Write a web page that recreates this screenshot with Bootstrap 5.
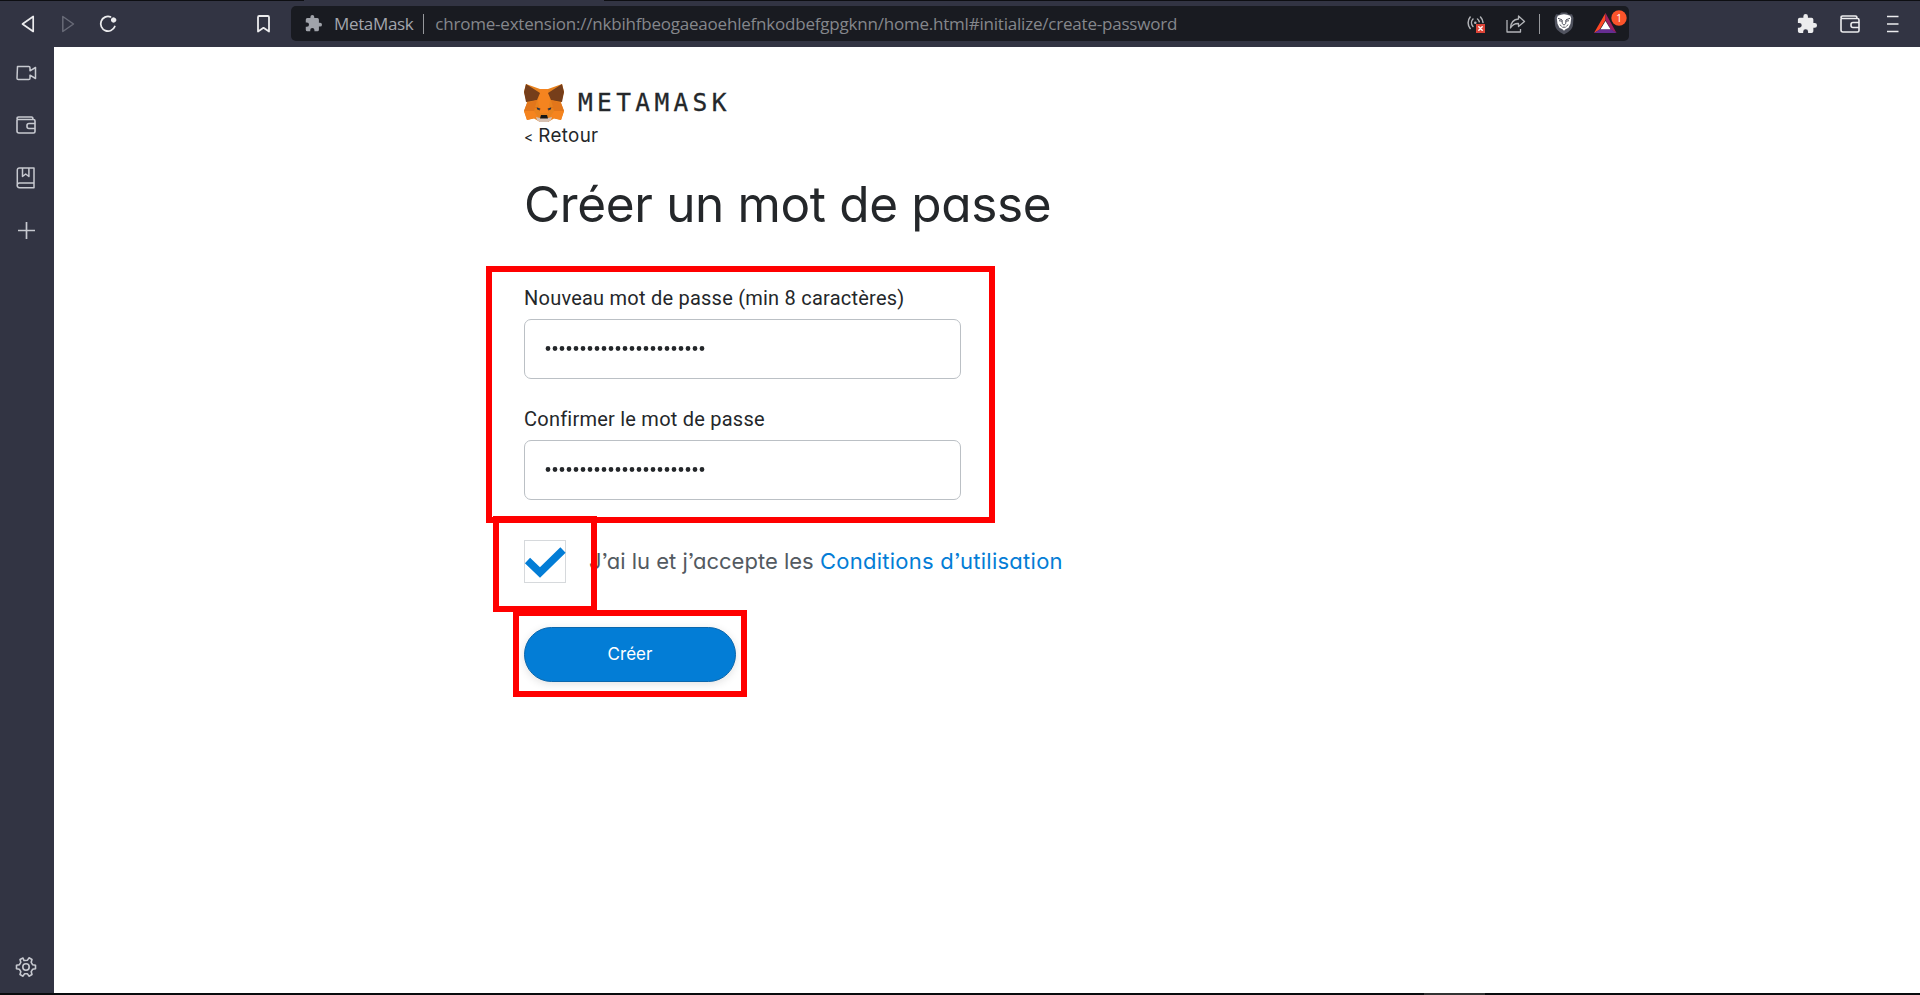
<!DOCTYPE html>
<html lang="fr">
<head>
<meta charset="utf-8">
<meta name="viewport" content="width=device-width, initial-scale=1">
<title>MetaMask</title>
<link href="https://cdn.jsdelivr.net/npm/bootstrap@5.3.0/dist/css/bootstrap.min.css" rel="stylesheet">
<style>
  html, body { height: 100%; overflow: hidden; }
  body { background: #fff; color: #24272a; font-family: Inter, "Noto Sans", sans-serif; }
  svg { display: block; flex: none; overflow: visible; }
  .toolbar { height: 47px; background: #323443; border-top: 1px solid #0d0e12; color: #ececee; padding: 5px 21px 6px 21px; }
  .seam { top: 0; left: 304px; width: 300px; height: 1px; background: #323443; }
  .address { width: 1338px; height: 35px; background: #191b21; border-radius: 5px; margin-left: 21px; padding-left: 14px; font: 17px/35px "Open Sans", sans-serif; color: #85878c; white-space: nowrap; }
  .site { color: #a3a6ad; margin-left: 12px; letter-spacing: -.35px; }
  .rule { width: 1px; height: 20px; background: #96989c; }
  .url { margin-left: 11px; letter-spacing: -.21px; }
  .sidebar { width: 54px; background: #323443; color: #c7c9d0; padding: 18px 0 15px 15px; }
  .taskbar { height: 2px; background: #090b0d; padding-left: 1424px; }
  .taskbar span { width: 61px; background: #333; }
  .page { padding: 37px 0 0 470px; }
  .wordmark { font: 24.5px/38px "DejaVu Sans Mono", monospace; letter-spacing: 4.35px; margin-left: 14px; -webkit-text-stroke: .3px #24272a; }
  .back { font-size: 18.8px; line-height: 23px; margin-top: 2px; letter-spacing: .35px; }
  .chevron { font-size: 14px; margin-right: -1px; }
  .heading { font-size: 49.5px; line-height: 52px; font-weight: 400; margin: 30px 0 56px; white-space: nowrap; letter-spacing: -.35px; }
  .euclid { font-feature-settings: "cv11", "ss03"; }
  .field-label { font: 20px/24px Roboto, sans-serif; margin-bottom: 9px; letter-spacing: .23px; }
  .secret { width: 437px; height: 60px; border: 1px solid #bbc0c5; border-radius: 7px; padding: 0 21px; }
  .tick { width: 42px; height: 43px; border: 1px solid #d6d9dc; }
  .terms { margin: 40px 0 44px; font-size: 22px; line-height: 43px; color: #535a61; white-space: nowrap; }
  .terms a { color: #037dd6; text-decoration: none; letter-spacing: .26px; }
  .create { width: 212px; height: 55px; border-radius: 28px; background: #037dd6; border: 1px solid #0a67ad; color: #fff; font-size: 17px; line-height: 53px; padding: 0; box-shadow: 0 2px 8px rgba(0,0,0,.12); }
  .frame { border: 6px solid red; }
  .frame-fields { left: 486px; top: 266px; width: 509px; height: 257px; }
  .frame-tick { left: 493px; top: 516px; width: 104px; height: 96px; }
  .frame-create { left: 513px; top: 610px; width: 234px; height: 87px; }
</style>
</head>
<body class="d-flex flex-column position-relative">
<svg width="0" height="0" class="position-absolute">
  <symbol id="wallet" viewBox="0 0 20 18"><g fill="none" stroke="currentColor" stroke-width="1.6" stroke-linejoin="round"><path d="M1 3.500V15a2 2 0 0 0 2 2h14.500a1.500 1.500 0 0 0 1.500-1.500V5a1.500 1.500 0 0 0-1.500-1.500H2.500A1.400 1.400 0 0 1 1 2.200C1 1.400 1.700 1 2.500 1H15.500c1 0 1.500.5 1.500 2.500"/><path d="M19 7.500h-6a2 2 0 0 0-2 2v1a2 2 0 0 0 2 2h6"/></g></symbol>
  <symbol id="puzzle" viewBox="1 1 22 22"><path fill="currentColor" d="M20.500 11H19V7a2 2 0 0 0-2-2h-4V3.500a2.500 2.500 0 0 0-5 0V5H4a2 2 0 0 0-2 2v3.800h1.500a2.700 2.700 0 0 1 0 5.400H2V20a2 2 0 0 0 2 2h3.800v-1.500a2.700 2.700 0 0 1 5.400 0V22H17a2 2 0 0 0 2-2v-4h1.500a2.500 2.500 0 0 0 0-5z"/></symbol>
</svg>

<header class="toolbar d-flex align-items-center flex-shrink-0">
  <svg width="14" height="18" viewBox="0 0 14 18" fill="none" stroke="currentColor" stroke-width="1.700" stroke-linejoin="round"><path d="M12.200 1.500v15L1.500 9z"/></svg>
  <svg style="margin-left:26px" width="14" height="18" viewBox="0 0 14 18" fill="none" stroke="#686a77" stroke-width="1.500" stroke-linejoin="round"><path d="M1.800 1.500v15L12.500 9z"/></svg>
  <svg style="margin-left:24px" width="18" height="18" viewBox="0 0 18 18" fill="none" stroke="currentColor" stroke-width="1.800" stroke-linecap="round"><path d="M11.500 1.900A7.300 7.300 0 1 0 15.800 11.500"/><circle cx="14.600" cy="5" r="2.200" fill="currentColor" stroke-width="1"/></svg>
  <svg style="margin-left:140px" width="13" height="18" viewBox="0 0 13 18" fill="none" stroke="currentColor" stroke-width="1.800" stroke-linejoin="round"><path d="M1 2.200c0-.8.400-1.200 1.200-1.200h8.600c.8 0 1.200.4 1.200 1.200V16.500l-5.500-3.700L1 16.500z"/></svg>
  <div class="address d-flex align-items-center">
    <svg width="17" height="17" color="#a0a3aa"><use href="#puzzle"/></svg>
    <span class="site">MetaMask</span>
    <span class="rule" style="margin-left:10px"></span>
    <span class="url">chrome-extension://nkbihfbeogaeaoehlefnkodbefgpgknn/home.html#initialize/create-password</span>
    <div class="d-flex align-items-center ms-auto">
      <svg width="20" height="20" viewBox="0 0 20 20" fill="none" stroke="#b2b4b8" stroke-width="1.500" stroke-linecap="round"><path d="M4.200 3a9 9 0 0 0 0 11.500M7 5a5.500 5.500 0 0 0 0 7.500M14.500 3a9 9 0 0 1 2.500 5.500M11.500 5a5.500 5.500 0 0 1 1.800 2.800"/><circle cx="9.300" cy="8.700" r="1.300" fill="#b2b4b8" stroke="none"/><path fill="#dc4437" stroke="none" d="M10 10h9v9h-9z"/><path stroke="#fff" d="m12.800 12.800 3.400 3.400m0-3.400-3.400 3.400"/></svg>
      <svg style="margin-left:20px" width="20" height="20" viewBox="0 0 20 20" fill="none" stroke="#b2b4b8" stroke-width="1.300" stroke-linejoin="round"><path d="M1 6v12h13.500v-3M12.500 2l6 5.500-6 5v-3c-3.500-.2-6 1-8 4.500.3-5.500 3-8.600 8-9z"/></svg>
      <span class="rule" style="margin-left:13px"></span>
      <svg style="margin-left:14px" width="20" height="23" viewBox="0 0 20 23"><path fill="#50535f" d="M5 2.500 7.500.5h5L15 2.500l3-.3 1.500 3.500-.5 7c-.5 4-3 6.500-9 9.800C4 19.200 1.500 16.700 1 12.700l-.5-7L2 2.200z"/><path fill="#fff" d="m10 2.300 3 .5 3.200 1 1 2.500-.7 5.500-2 4-3 1.500-1.500 1.500-1.500-1.500-3-1.500-2-4-.7-5.500 1-2.500 3.200-1z"/><path fill="none" stroke="#50535f" stroke-width="1" d="m4 6.300 4 1.500M16 6.300l-4 1.500M5 8.700l3 .5M15 8.700l-3 .5M8.200 8v3.500l1.800 1.700 1.800-1.700V8M6 12.500l1.500 2M14 12.500l-1.500 2M8.300 15.200h3.400"/></svg>
      <div class="position-relative" style="margin:0 3px 0 20px">
        <svg width="32" height="21" viewBox="0 0 32 21"><path fill="#ff4724" d="M11.500 0 0 20l5.500-3.300 6-9.700z"/><path fill="#9e1f63" d="m11.500 0 11 20-5.500-3.300L11.500 7z"/><path fill="#662d91" d="M0 20h22.500L17 16.300H6z"/><path fill="#fff" d="m11.500 8 5 8.300h-10z"/></svg>
        <svg class="position-absolute" style="left:17px;top:-3px" width="16" height="16" viewBox="0 0 16 16"><circle cx="8" cy="8" r="7.700" fill="#fb542b"/><text x="8" y="11.600" text-anchor="middle" font-size="10" fill="#fff">1</text></svg>
      </div>
    </div>
  </div>
  <svg style="margin-left:168px" width="20" height="20"><use href="#puzzle"/></svg>
  <svg style="margin-left:23px" width="20" height="18"><use href="#wallet"/></svg>
  <svg style="margin-left:27px" width="12" height="18" viewBox="0 0 12 18" stroke="currentColor" stroke-width="1.700"><path d="M0 1.500h11.500M0 9h11.500M0 16.500h11.500"/></svg>
</header>
<div class="seam position-absolute"></div>

<div class="d-flex flex-grow-1">
  <nav class="sidebar d-flex flex-column">
    <svg width="22" height="16" viewBox="0 0 22 16" fill="none" stroke="currentColor" stroke-width="1.500" stroke-linejoin="round"><path d="M2.500 1.500h11.200c.8 0 1.300.5 1.300 1.300v3l5.500-3.300v11L15 10.200v3c0 .8-.5 1.300-1.300 1.300H3.300c-.8 0-1.300-.5-1.300-1.300z"/></svg>
    <svg style="margin:35px 0 0 1px" width="20" height="18"><use href="#wallet"/></svg>
    <svg style="margin:33px 0 0 1px" width="20" height="22" viewBox="0 0 20 22" fill="none" stroke="currentColor" stroke-width="1.500" stroke-linejoin="round"><path d="M18 16H3.500a2.300 2.300 0 0 0 0 4.700H18zM1.300 18.300V3a2 2 0 0 1 2-2H18v15M6.500 1v8.500L9.700 7l3.200 2.500V1"/></svg>
    <svg style="margin:33px 0 0 3px" width="17" height="17" viewBox="0 0 17 17" stroke="currentColor" stroke-width="1.700"><path d="M8.500 0v17M0 8.500h17"/></svg>
    <svg class="mt-auto" width="22" height="22" viewBox="-11 -11 22 22" fill="none" stroke="currentColor" stroke-width="1.600" stroke-linejoin="round"><path d="M-2-6.500-3-9-6-7.500-5.200-4.700-6.700-2.200-9.500-1.700V1.700L-6.700 2.200-5.200 4.700-6 7.500-3 9.200-1.500 6.800H1.500L3 9.200 6 7.500 5.200 4.700 6.700 2.200 9.500 1.700V-1.700L6.700-2.200 5.200-4.700 6-7.500 3-9.200 1.500-6.800z"/><circle r="3.200"/></svg>
  </nav>

  <main class="page">
    <div class="d-flex">
      <svg width="40" height="38" viewBox="0 0 40 38">
        <path fill="#e8821e" d="m2 0 14 5h8L38 0l2 8-3 11 3 8-3 9-7-1.500-6 3.500h-8l-6-3.500L3 36l-3-9 3-8L0 8z"/>
        <path fill="#f5841f" d="m16 5-2 11 2 13h8l2-13-2-11zM0 27h10l4 6-11 3zm40 0H30l-4 6 11 3z"/>
        <path fill="#763e1a" d="m2 0 14 9-3 7-11 2-1-5L0 8zm36 0L24 9l3 7 11 2 1-5 1-5z"/>
        <path fill="#e2761b" d="m3 19 10-3-3 11H0zm34 0-10-3 3 11h10z"/>
        <path fill="#d7c1b3" d="m12 33 4 1h8l4-1-1 3-3 2h-8l-3-2z"/>
        <path fill="#cd6116" d="m11 23 6 1.500-1.500 2.500zM29 23l-6 1.500 1.500 2.500z"/>
        <path fill="#233447" d="m13 23.500 3 1-.5 1.700-2.500-1zM27 23.500l-3 1 .5 1.700 2.500-1z"/>
        <path fill="#161616" d="M17 31h6l1 3.500h-8z"/>
      </svg>
      <div class="wordmark">METAMASK</div>
    </div>
    <div class="back euclid"><span class="chevron">&lt;</span> Retour</div>
    <h1 class="heading euclid">Créer un mot de passe</h1>

    <div class="field-label">Nouveau mot de passe (min 8 caractères)</div>
    <div class="secret d-flex align-items-center"><svg width="160" height="8"><path d="M2 3.500h156" stroke="#24272a" stroke-width="4.800" stroke-linecap="round" stroke-dasharray="0 7"/></svg></div>
    <div class="field-label" style="margin-top:28px">Confirmer le mot de passe</div>
    <div class="secret d-flex align-items-center"><svg width="160" height="8"><path d="M2 3.500h156" stroke="#24272a" stroke-width="4.800" stroke-linecap="round" stroke-dasharray="0 7"/></svg></div>

    <div class="terms euclid d-flex">
      <div class="tick"><svg width="40" height="41" viewBox="0 0 40 41"><path fill="none" stroke="#037dd6" stroke-width="7.500" stroke-linejoin="miter" d="M2.500 19.500 15 31.500 38 9"/></svg></div>
      <div style="margin-left:23px">J’ai lu et j’accepte les <a href="#">Conditions d’utilisation</a></div>
    </div>
    <button class="btn create euclid" type="button">Créer</button>
  </main>
</div>
<footer class="taskbar d-flex flex-shrink-0"><span></span></footer>

<div class="frame frame-fields position-absolute"></div>
<div class="frame frame-tick position-absolute"></div>
<div class="frame frame-create position-absolute"></div>
<script src="https://cdn.jsdelivr.net/npm/bootstrap@5.3.0/dist/js/bootstrap.bundle.min.js"></script>
</body>
</html>
